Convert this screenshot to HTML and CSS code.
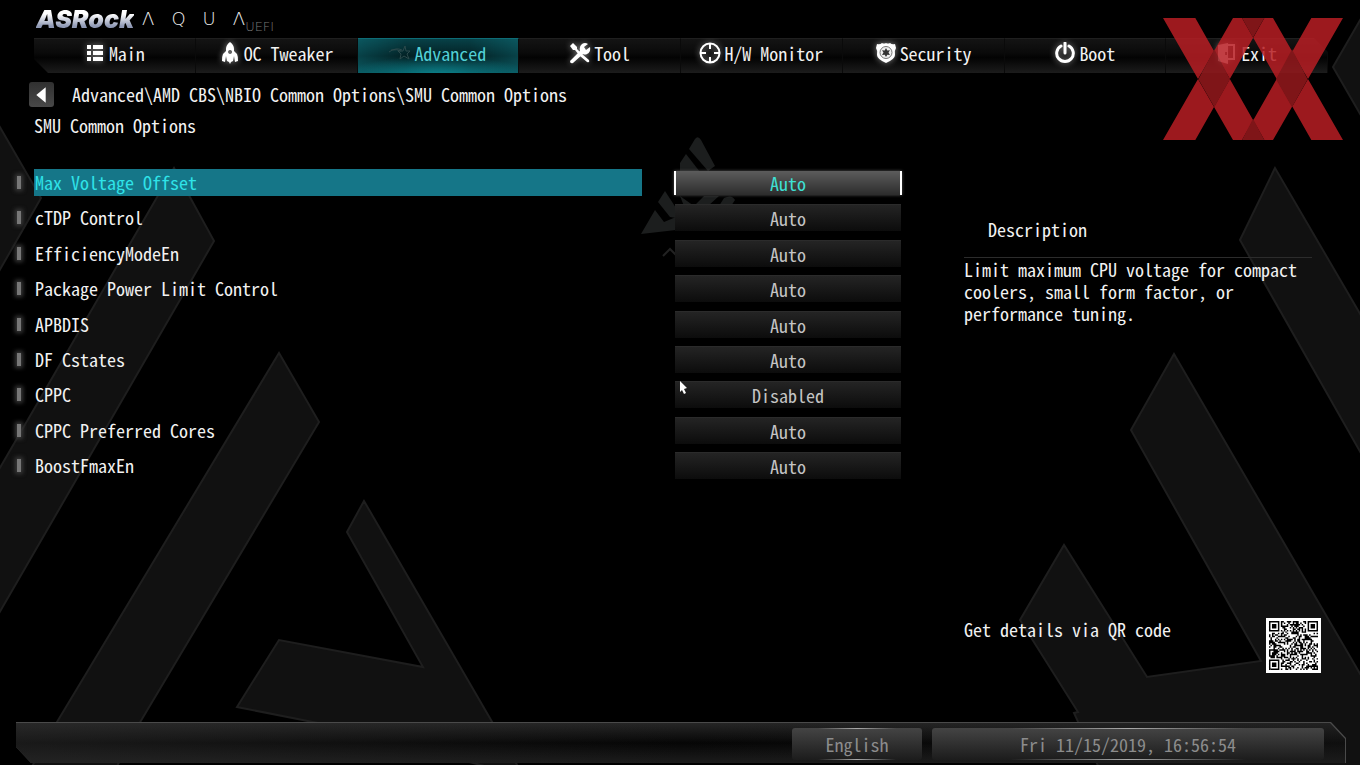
FILE: index.html
```html
<!DOCTYPE html>
<html lang="en">
<head>
<meta charset="utf-8">
<title>ASRock AQUA UEFI - SMU Common Options</title>
<link rel="stylesheet" href="styles.css">
</head>
<body>
<svg class="backdrop" viewBox="0 0 1360 765" preserveAspectRatio="xMidYMid slice" aria-hidden="true">
  <g class="shard">
    <path d="M-6 117L41 198L-6 280Z"/>
    <path d="M174 168L214 241L-6 622V478Z"/>
    <path d="M279 353L319 422L139 724L115 770H30L57 722Z"/>
    <path d="M364 501L347 532L423 667L279 640L237 707L323 724L500 770L520 770Z"/>
    <path d="M1275 168L1240 240L1366 462V324Z"/>
    <path d="M1366 10L1333 67L1366 124Z"/>
    <path d="M1174 354L1131 430L1261 661L1147 677L1064 545L1020 620L1078 712L1074 713L1100 770H1366V684Z"/>
  </g>
  <g class="emblem">
    <path d="M689 149L695 139Q698 135 701 140L715 166L708 171Z"/>
    <path d="M686 154L700 172H680V163Z"/>
    <path d="M665 191L676 208V218L670 217L658 202Z"/>
    <path d="M655 210L664 222L676 217V230L641 234Z"/>
    <path d="M680 196L694 206L704 196H719L708 206H684ZM724 198Q732 194 735 200L731 206H719Z"/>
    <path class="caret" d="M663 256L670 249L676 255"/>
  </g>
</svg>

<header>
  <div class="brand">
    <strong class="maker">ASRock</strong>
    <span class="series"><span>Λ</span><span>Q</span><span>U</span><span>Λ</span></span>
    <span class="uefi">UEFI</span>
  </div>
  <nav>
    <a href="#main"><svg viewBox="0 0 22 22"><path d="M3 3h4v4H3zM9 3h10v4H9zM3 9h4v4H3zM9 9h10v4H9zM3 15h4v4H3zM9 15h10v4H9z"/></svg>Main</a>
    <a href="#oc"><svg viewBox="0 0 22 22"><path fill-rule="evenodd" d="M11 0Q15 3 15 7V9L18 12Q19 14 19 19L16 20L15 14L14 19L12 20L11 22L10 20L8 19L7 14L6 20L3 19Q3 14 4 12L7 9V7Q7 3 11 0ZM11 8a2 2 0 1 0 0.1 0Z"/></svg>OC Tweaker</a>
    <a href="#advanced" class="active" aria-current="page"><svg class="dim" viewBox="0 0 22 22"><path d="M0 10Q7 5 13 8M2 8Q8 7 12 9M16 4L17 9H21L18 12L20 17L15 14L11 17L12 12L9 9H14Z"/></svg>Advanced</a>
    <a href="#tool"><svg viewBox="0 0 22 22"><path d="M2 3L4 1L8 5V7L12 11L10 13L6 8H4L1 4ZM13 12L20 18Q21 21 18 20L11 14ZM1 19L11 9Q10 4 13 2Q16 0 19 2L15 5L17 8L21 5Q22 10 18 12Q16 13 14 12L4 21Q1 22 1 19Z"/></svg>Tool</a>
    <a href="#monitor"><svg class="line" viewBox="0 0 22 22"><circle cx="11" cy="11" r="9.5"/><path d="M11 2v5M11 15v5M2 11h5M15 11h5"/></svg>H/W Monitor</a>
    <a href="#security"><svg viewBox="0 0 22 22"><path d="M2 2Q5 3 7 1Q9 2 11 1Q13 2 15 1Q17 3 20 2L21 6Q19 9 20 13Q20 17 11 21Q2 17 2 13Q3 9 1 6Z"/><circle cx="11" cy="10.500" r="6" fill="#eee" stroke="#777"/><path fill="#333" d="M11 6L12.300 8.500L15 8.200L13.500 10.500L15 13L12.300 12.700L11 15L9.700 12.700L7 13L8.500 10.500L7 8.200L9.700 8.500Z"/></svg>Security</a>
    <a href="#boot"><svg class="line power" viewBox="0 0 22 22"><path d="M7 4A8.300 8.300 0 1 0 15 4M11 1v10"/></svg>Boot</a>
    <a href="#exit"><svg viewBox="0 0 22 22"><path fill-rule="evenodd" d="M2 3L12 1V22L2 19ZM9 10v3h2v-3ZM12 2H19V18H12V16H17V4H12Z"/></svg>Exit</a>
  </nav>
</header>

<div class="crumbs">
  <button type="button" class="back" aria-label="Back"><svg viewBox="0 0 24 24"><path d="M16 5V20L7 12.500Z"/></svg></button>
  <span>Advanced\AMD CBS\NBIO Common Options\SMU Common Options</span>
</div>
<h1>SMU Common Options</h1>

<main>
  <form class="options">
    <div class="option selected"><i></i><label for="o1">Max Voltage Offset</label><span class="field"><select id="o1"><option>Auto</option></select></span></div>
    <div class="option"><i></i><label for="o2">cTDP Control</label><span class="field"><select id="o2"><option>Auto</option></select></span></div>
    <div class="option"><i></i><label for="o3">EfficiencyModeEn</label><span class="field"><select id="o3"><option>Auto</option></select></span></div>
    <div class="option"><i></i><label for="o4">Package Power Limit Control</label><span class="field"><select id="o4"><option>Auto</option></select></span></div>
    <div class="option"><i></i><label for="o5">APBDIS</label><span class="field"><select id="o5"><option>Auto</option></select></span></div>
    <div class="option"><i></i><label for="o6">DF Cstates</label><span class="field"><select id="o6"><option>Auto</option></select></span></div>
    <div class="option"><i></i><label for="o7">CPPC</label><span class="field"><select id="o7"><option>Disabled</option></select><svg class="pointer" viewBox="0 0 8 14"><path d="M0 0L7 7L4 8L6 12L4 13L2 9L0 11Z"/></svg></span></div>
    <div class="option"><i></i><label for="o8">CPPC Preferred Cores</label><span class="field"><select id="o8"><option>Auto</option></select></span></div>
    <div class="option"><i></i><label for="o9">BoostFmaxEn</label><span class="field"><select id="o9"><option>Auto</option></select></span></div>
  </form>
  <aside>
    <h2>Description</h2>
    <p>Limit maximum CPU voltage for compact coolers, small form factor, or performance tuning.</p>
    <div class="details">
      <span>Get details via QR code</span>
      <svg id="qr" viewBox="-2 -2 37 37" role="img" aria-label="QR code"></svg>
    </div>
  </aside>
</main>

<footer>
  <button type="button" class="language">English</button>
  <time datetime="2019-11-15T16:56:54">Fri 11/15/2019, 16:56:54</time>
</footer>

<svg class="watermark" viewBox="0 0 540 366" aria-hidden="true">
  <g opacity=".85">
    <path fill="#b81e24" d="M0 0H97L304 366H210ZM0 366H97L304 0H210ZM237 0H330L540 366H445ZM237 366H330L540 0H445Z"/>
    <path fill="#96191d" d="M106 184L154 94L201 184L154 268ZM339 184L387 94L434 184L387 268ZM237 0H304L270 59ZM237 366H304L270 302Z"/>
  </g>
</svg>
<script src="qr.js"></script>
</body>
</html>
```
FILE: qr.js
```js
// Fills the QR symbol: three finder marks, timing lines and data modules.
const size = 33;
let seed = 20191115;
const nextBit = () => {
  seed = (seed * 1103515245 + 12345) % 2147483648;
  return (seed >> 16) & 1;
};
const finder = (x, y) => {
  const d = Math.max(Math.abs(x - 3), Math.abs(y - 3));
  return d !== 2 && d < 4;
};
let path = "";
for (let y = 0; y < size; y++) {
  for (let x = 0; x < size; x++) {
    const bit = nextBit();
    const fx = x > size - 9 ? size - 1 - x : x;
    const fy = y > size - 9 ? size - 1 - y : y;
    const inFinder = fx < 8 && fy < 8 && !(x > 8 && y > 8);
    let on = bit === 1;
    if (inFinder) on = finder(fx, fy);
    else if (x === 6) on = y % 2 === 0;
    else if (y === 6) on = x % 2 === 0;
    if (on) path += `M${x} ${y}h1v1h-1z`;
  }
}
const shape = document.createElementNS("http://www.w3.org/2000/svg", "path");
shape.setAttribute("d", path);
document.getElementById("qr").append(shape);
```
FILE: styles.css
```css
* { box-sizing: border-box; }

body {
  margin: 0;
  min-height: 100vh;
  position: relative;
  display: flex;
  flex-direction: column;
  background: #000;
  color: #f2f2f2;
  font: 18px/24px "Noto Sans Mono CJK JP", "Liberation Mono", monospace;
}

button, select { font: inherit; border: 0; border-radius: 0; }

.backdrop {
  position: absolute;
  inset: 0;
  z-index: -1;
  width: 100%;
  height: 100%;
}
.shard path { fill: #111; stroke: #1e1e1e; stroke-width: 2; }
.emblem path { fill: #1c1e1e; }
.emblem .caret { fill: none; stroke: #222; stroke-width: 2; }

.brand {
  height: 38px;
  padding: 7px 36px 0;
  display: flex;
  align-items: flex-start;
}
.maker {
  font: italic 900 25px/24px Inter, sans-serif;
  background: linear-gradient(#fff 30%, #8f99b5 80%);
  background-clip: text;
  color: transparent;
}
.series {
  display: flex;
  gap: 17px;
  padding-left: 8px;
  font: 200 18px/24px "DejaVu Sans", sans-serif;
  color: #eee;
}
.uefi { padding-top: 8px; font: 200 13px/24px "DejaVu Sans", sans-serif; color: #777; }

nav {
  margin: 0 32px 0 34px;
  display: grid;
  grid-template-columns: repeat(8, 1fr);
  clip-path: polygon(0 0, calc(100% - 14px) 0, 100% 14px, 100% 100%, 14px 100%, 0 calc(100% - 14px));
}
nav a {
  height: 35px;
  padding-bottom: 7px;
  display: flex;
  align-items: center;
  justify-content: center;
  gap: 3px;
  color: #f2f2f2;
  text-decoration: none;
  white-space: nowrap;
  border-top: 1px solid #1f1f1f;
  border-right: 1px solid #0a0a0a;
  background: linear-gradient(#141414, #0a0a0a 40%, #030303 55%, #1c1c1c);
}
nav svg {
  width: 22px;
  height: 22px;
  fill: #fff;
  filter: drop-shadow(0 0 3px #888);
}
nav svg.line { fill: none; stroke: #fff; stroke-width: 2; }
nav svg.power { stroke-width: 3; stroke-linecap: round; }
nav svg.dim { fill: none; stroke: #2c4a4c; stroke-width: 1; filter: none; }
nav a.active {
  color: #52cfd6;
  border-top-color: #0d6c76;
  background:
    radial-gradient(ellipse 60% 60% at 50% 110%, #0c8690, transparent),
    linear-gradient(90deg, #0c5a6299, #04262a66 30%, #04262a66 70%, #0c5a6299),
    linear-gradient(#0a535b, #021d20 50%, #0a535b);
}

.crumbs {
  padding: 9px 29px 0;
  display: flex;
  align-items: center;
  gap: 18px;
}
.crumbs span { padding-bottom: 1px; }
.back {
  width: 25px;
  height: 25px;
  padding: 0;
  border-radius: 3px;
  background: linear-gradient(#303030, #484848);
}
.back svg { display: block; fill: #fff; }

h1, h2, p { margin: 0; font: inherit; }
h1 { padding: 6px 34px 0; }

main {
  flex: 1;
  padding: 0 39px 49px 15px;
  display: flex;
  gap: 62px;
}
.options {
  flex: 1;
  padding-top: 32px;
  display: flex;
  flex-direction: column;
  gap: 1.1vh;
}
.option {
  display: grid;
  grid-template-columns: 8px 1fr 228px;
  align-items: center;
}
.option i {
  width: 4px;
  height: 13px;
  margin-left: 2px;
  background: #777;
  box-shadow: 0 0 4px 2px #3a3a3a;
}
.option label { margin: 0 32px 0 11px; padding-left: 1px; line-height: 27px; }
.field { position: relative; display: flex; padding: 0 1px; }
.field select {
  width: 100%;
  height: 27px;
  padding: 0;
  appearance: none;
  text-align: center;
  text-align-last: center;
  color: #c4c4c4;
  background: linear-gradient(#242424, #0c0c0c);
  border-top: 1px solid #2b2b2b;
}
.selected label { background: #157688; color: #2fe3e8; }
.selected .field { padding: 0; }
.selected select {
  height: 24px;
  color: #3fe0d4;
  background: linear-gradient(#5c5c5c, #2c2c2c);
  border: solid #fff;
  border-width: 0 2px;
  box-shadow: 0 0 3px #555;
}
.pointer {
  position: absolute;
  left: 6px;
  top: 0;
  width: 8px;
  height: 14px;
  fill: #fff;
}

aside { width: 357px; display: flex; flex-direction: column; }
h2 { padding: 80px 24px 16px; }
h2 + p {
  margin-right: 9px;
  border-top: 1px solid #2c2c2c;
  line-height: 22px;
}
.details {
  margin-top: auto;
  display: flex;
  justify-content: space-between;
  line-height: 22px;
}
#qr { width: 55px; height: 55px; background: #fff; }

footer {
  position: relative;
  z-index: 0;
  margin: 0 14px 2px 16px;
  padding: 6px 22px 3px;
  display: flex;
  justify-content: flex-end;
  gap: 10px;
  text-align: center;
  background: #4a4a4a;
  clip-path: polygon(0 0, calc(100% - 15px) 0, 100% 16px, 100% 100%, 15px 100%, 0 calc(100% - 16px));
}
footer::before {
  content: "";
  position: absolute;
  inset: 1px 1px 0 0;
  z-index: -1;
  background: linear-gradient(90deg, #2a2a2a88, transparent 50%, #1c1c1c66), linear-gradient(#262626, #060606 50%, #1c1c1c);
  clip-path: polygon(0 0, calc(100% - 15px) 0, 100% 16px, 100% 100%, 0 100%);
}
.language, time {
  height: 32px;
  padding: 0;
  line-height: 32px;
  color: #8c8c8c;
  border-radius: 3px;
  background:
    linear-gradient(90deg, transparent 20%, #aaa 50%, transparent 80%) top / 100% 1px no-repeat,
    linear-gradient(90deg, transparent 20%, #aaa 50%, transparent 80%) bottom / 100% 1px no-repeat,
    linear-gradient(#444, #1c1c1c);
}
.language { width: 130px; }
time { width: 392px; }

.watermark {
  position: absolute;
  right: 17px;
  top: 18px;
  width: 180px;
  height: 122px;
  pointer-events: none;
}
```
